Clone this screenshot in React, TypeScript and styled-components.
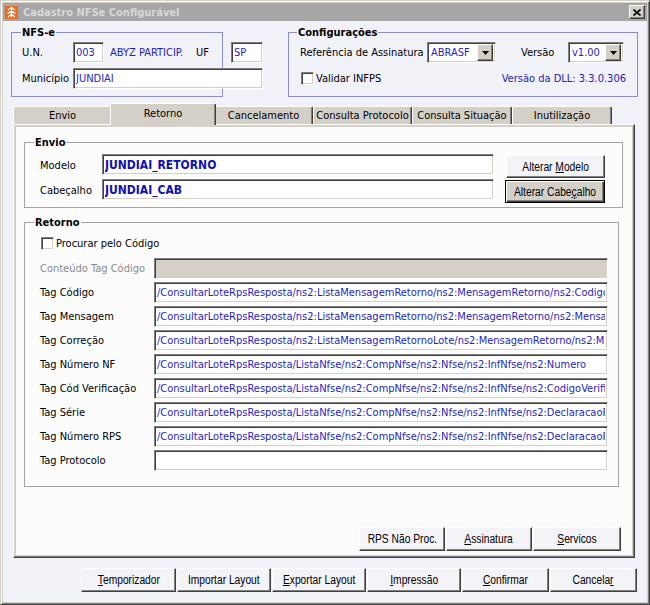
import React from "react";
import styled, { createGlobalStyle, css } from "styled-components";

const FONT = `"DejaVu Sans Condensed", "DejaVu Sans", sans-serif`;
const BTN_FONT = `"Liberation Sans", Arial, sans-serif`;

const FACE = "#d4d0c8";
const BODY = "#f1f1f8";
const SHEET = "#fcfcfc";
const VALUE = "#1f1fbf";

const GlobalStyle = createGlobalStyle`
  html, body { margin: 0; padding: 0; background: #ffffff; }
  body { font-family: ${FONT}; font-size: 11px; color: #000; }
  *, *::before, *::after { box-sizing: border-box; }
`;

const raised = css`
  border: 1px solid;
  border-color: #ffffff #404040 #404040 #ffffff;
  box-shadow: inset -1px -1px #808080;
`;

const sunken = css`
  border: 1px solid;
  border-color: #808080 #ffffff #ffffff #808080;
  box-shadow: inset 1px 1px #404040, inset -1px -1px ${FACE};
`;

const Window = styled.div`
  width: 650px;
  height: 605px;
  display: flex;
  flex-direction: column;
  background: ${FACE};
  border: 1px solid;
  border-color: ${FACE} #404040 #404040 ${FACE};
  box-shadow: inset 1px 1px #ffffff, inset -1px -1px #808080;
  padding: 2px;
`;

const TitleBar = styled.div`
  height: 18px;
  flex-shrink: 0;
  display: flex;
  align-items: center;
  background: #a6a6a6;
  padding: 0 2px 0 2px;
`;

const TitleText = styled.span`
  margin-left: 5px;
  font-weight: bold;
  font-size: 11px;
  color: #d8d8d8;
  white-space: nowrap;
`;

const CloseButton = styled.div`
  margin-left: auto;
  width: 16px;
  height: 14px;
  background: ${FACE};
  ${raised};
  display: flex;
  align-items: center;
  justify-content: center;
`;

const Body = styled.div`
  flex: 1;
  background: ${BODY};
  display: flex;
  flex-direction: column;
  padding: 5px 9px 0 8px;
`;

const TopRow = styled.div`
  display: flex;
  justify-content: space-between;
  height: 71px;
  flex-shrink: 0;
`;

const Group = styled.fieldset<{ $w: number; $h: number; $tone?: "blue" | "gray"; $mt?: number }>`
  margin: ${(p) => p.$mt ?? 0}px 0 0 0;
  padding: 0;
  min-width: 0;
  width: ${(p) => p.$w}px;
  height: ${(p) => p.$h}px;
  flex-shrink: 0;
  border: 1px solid ${(p) => (p.$tone === "gray" ? "#a4a4a4" : "#8c8cc8")};
`;

const Legend = styled.legend<{ $ml?: number }>`
  margin-left: ${(p) => p.$ml ?? 9}px;
  padding: 0 1px;
  font-weight: bold;
  font-size: 11px;
  line-height: 13px;
`;

const GroupContent = styled.div<{ $pt: number; $pl: number; $pr?: number; $gap: number }>`
  display: flex;
  flex-direction: column;
  padding: ${(p) => p.$pt}px ${(p) => p.$pr ?? 0}px 0 ${(p) => p.$pl}px;
  gap: ${(p) => p.$gap}px;
`;

const Row = styled.div<{ $h: number; $align?: string }>`
  display: flex;
  align-items: ${(p) => p.$align ?? "center"};
  height: ${(p) => p.$h}px;
`;

const Label = styled.span<{ $w?: number; $ml?: number; $muted?: boolean; $lh?: number }>`
  ${(p) => (p.$w ? `width: ${p.$w}px;` : "")}
  ${(p) => (p.$lh ? `line-height: ${p.$lh}px;` : "")}
  margin-left: ${(p) => p.$ml ?? 0}px;
  flex-shrink: 0;
  white-space: nowrap;
  color: ${(p) => (p.$muted ? "#8a8a8a" : "#000")};
`;

const BlueText = styled.span<{ $w?: number; $ml?: number; $right?: boolean }>`
  ${(p) => (p.$w ? `width: ${p.$w}px;` : "")}
  margin-left: ${(p) => (p.$right ? "auto" : `${p.$ml ?? 0}px`)};
  white-space: nowrap;
  overflow: hidden;
  flex-shrink: 0;
  color: #1e1eb0;
`;

const Field = styled.input<{ $w: number; $bold?: boolean; $disabled?: boolean }>`
  width: ${(p) => p.$w}px;
  height: 21px;
  flex-shrink: 0;
  margin: 0;
  padding: 0 2px;
  font-family: ${FONT};
  font-size: ${(p) => (p.$bold ? "12px" : "11px")};
  font-weight: ${(p) => (p.$bold ? "bold" : "normal")};
  color: ${(p) => (p.$bold ? "#1010b0" : VALUE)};
  background: ${(p) => (p.$disabled ? FACE : "#ffffff")};
  ${sunken};
  outline: none;
`;

const Combo = styled.div<{ $w: number }>`
  width: ${(p) => p.$w}px;
  height: 21px;
  flex-shrink: 0;
  display: flex;
  align-items: center;
  background: #ffffff;
  ${sunken};
  padding: 2px;
`;

const ComboText = styled.span`
  flex: 1;
  padding-left: 1px;
  color: ${VALUE};
  white-space: nowrap;
`;

const ComboButton = styled.span`
  width: 16px;
  height: 17px;
  background: ${FACE};
  ${raised};
  display: flex;
  align-items: center;
  justify-content: center;
`;

const Check = styled.span<{ $ml?: number }>`
  width: 13px;
  height: 13px;
  flex-shrink: 0;
  margin-left: ${(p) => p.$ml ?? 0}px;
  background: #ffffff;
  ${sunken};
`;

const TabControl = styled.div`
  margin: 6px 3px 0 2px;
  display: flex;
  flex-direction: column;
`;

const TabStrip = styled.div`
  display: flex;
  align-items: flex-end;
  height: 21px;
  position: relative;
  z-index: 1;
`;

const Tab = styled.div<{ $w: number; $active?: boolean }>`
  width: ${(p) => (p.$active ? p.$w + 4 : p.$w)}px;
  height: ${(p) => (p.$active ? 22 : 18)}px;
  margin: 0 ${(p) => (p.$active ? -2 : 0)}px ${(p) => (p.$active ? -1 : 0)}px;
  position: relative;
  z-index: ${(p) => (p.$active ? 2 : 1)};
  flex-shrink: 0;
  background: ${FACE};
  border-top: 1px solid #ffffff;
  border-left: 1px solid #ffffff;
  border-right: 1px solid #404040;
  box-shadow: inset -1px 0 #808080;
  border-radius: 2px 2px 0 0;
  text-align: center;
  padding-top: ${(p) => (p.$active ? 3 : 2)}px;
  line-height: 13px;
  white-space: nowrap;
  overflow: hidden;
`;

const Panel = styled.div`
  height: 434px;
  background: ${FACE};
  ${raised};
  padding: 2px;
  display: flex;
`;

const Sheet = styled.div`
  flex: 1;
  background: ${SHEET};
  display: flex;
  flex-direction: column;
  padding: 9px 0 4px 8px;
`;

const TagList = styled.div`
  display: flex;
  flex-direction: column;
  gap: 3px;
  margin-top: 3px;
`;

const ButtonRow = styled.div<{ $mt?: string; $pr: number }>`
  display: flex;
  justify-content: flex-end;
  gap: 1px;
  margin-top: ${(p) => p.$mt ?? "0"};
  padding-right: ${(p) => p.$pr}px;
  flex-shrink: 0;
`;

const Button = styled.button<{ $w: number; $h?: number; $face?: boolean; $focused?: boolean; $ml?: number; $mt?: number }>`
  width: ${(p) => p.$w}px;
  height: ${(p) => p.$h ?? 24}px;
  flex-shrink: 0;
  margin: ${(p) => p.$mt ?? 0}px 0 0 ${(p) => p.$ml ?? 0}px;
  padding: 0;
  display: flex;
  align-items: center;
  justify-content: center;
  overflow: hidden;
  color: #000;
  background: ${(p) => (p.$face ? FACE : "#f3f3f8")};
  cursor: default;
  ${(p) =>
    p.$focused
      ? css`
          border: 1px solid #000;
          box-shadow: inset 1px 1px #ffffff, inset -1px -1px #404040, inset -2px -2px #808080;
        `
      : raised};
`;

const ButtonLabel = styled.span`
  display: inline-block;
  font-family: ${BTN_FONT};
  font-size: 12.5px;
  white-space: nowrap;
  transform: scaleX(0.82);
  u { text-decoration: underline; }
`;

const AppIcon = () => (
  <svg width="13" height="13" viewBox="0 0 13 13">
    <rect width="13" height="13" fill="#ee6a1c" />
    <path d="M6.5 1.5v10M3 4l3.5-2.5L10 4M2.5 7.5l4-2.5 4 2.5M3 11l3.5-3 3.5 3" stroke="#fff" strokeWidth="1.2" fill="none" />
  </svg>
);

const CloseGlyph = () => (
  <svg width="8" height="7" viewBox="0 0 8 7">
    <path d="M0.5 0.5L7.5 6.5M7.5 0.5L0.5 6.5" stroke="#000" strokeWidth="1.6" />
  </svg>
);

const DownArrow = () => (
  <svg width="7" height="4" viewBox="0 0 7 4">
    <path d="M0 0h7L3.5 4z" fill="#000" />
  </svg>
);

const tabs = [
  { label: "Envio", w: 99 },
  { label: "Retorno", w: 102, active: true },
  { label: "Cancelamento", w: 99 },
  { label: "Consulta Protocolo", w: 99 },
  { label: "Consulta Situação", w: 100 },
  { label: "Inutilização", w: 100 },
];

const tagRows: { label: string; value: string; disabled?: boolean }[] = [
  { label: "Conteúdo Tag Código", value: "", disabled: true },
  { label: "Tag Código", value: "/ConsultarLoteRpsResposta/ns2:ListaMensagemRetorno/ns2:MensagemRetorno/ns2:Codigo" },
  { label: "Tag Mensagem", value: "/ConsultarLoteRpsResposta/ns2:ListaMensagemRetorno/ns2:MensagemRetorno/ns2:Mensagem" },
  { label: "Tag Correção", value: "/ConsultarLoteRpsResposta/ns2:ListaMensagemRetornoLote/ns2:MensagemRetorno/ns2:Mensagem" },
  { label: "Tag Número NF", value: "/ConsultarLoteRpsResposta/ListaNfse/ns2:CompNfse/ns2:Nfse/ns2:InfNfse/ns2:Numero" },
  { label: "Tag Cód Verificação", value: "/ConsultarLoteRpsResposta/ListaNfse/ns2:CompNfse/ns2:Nfse/ns2:InfNfse/ns2:CodigoVerificacao" },
  { label: "Tag Série", value: "/ConsultarLoteRpsResposta/ListaNfse/ns2:CompNfse/ns2:Nfse/ns2:InfNfse/ns2:DeclaracaoPrestacaoServico/ns2:Rps/ns2:Serie" },
  { label: "Tag Número RPS", value: "/ConsultarLoteRpsResposta/ListaNfse/ns2:CompNfse/ns2:Nfse/ns2:InfNfse/ns2:DeclaracaoPrestacaoServico/ns2:Rps/ns2:Numero" },
  { label: "Tag Protocolo", value: "" },
];

export default function App() {
  return (
    <>
      <GlobalStyle />
      <Window>
        <TitleBar>
          <AppIcon />
          <TitleText>Cadastro NFSe Configurável</TitleText>
          <CloseButton>
            <CloseGlyph />
          </CloseButton>
        </TitleBar>
        <Body>
          <TopRow>
            <Group $w={212} $h={71}>
              <Legend>NFS-e</Legend>
              <GroupContent $pt={3} $pl={10} $gap={5}>
                <Row $h={21}>
                  <Label $w={51}>U.N.</Label>
                  <Field $w={31} readOnly defaultValue="003" />
                  <BlueText $w={78} $ml={6}>ABYZ PARTICIP.</BlueText>
                  <Label $w={35} $ml={8}>UF</Label>
                  <Field $w={32} readOnly defaultValue="SP" />
                </Row>
                <Row $h={21}>
                  <Label $w={51}>Município</Label>
                  <Field $w={190} readOnly defaultValue="JUNDIAI" />
                </Row>
              </GroupContent>
            </Group>
            <Group $w={350} $h={71}>
              <Legend $ml={8}>Configurações</Legend>
              <GroupContent $pt={3} $pl={11} $pr={11} $gap={5}>
                <Row $h={21}>
                  <Label $w={127}>Referência de Assinatura</Label>
                  <Combo $w={69}>
                    <ComboText>ABRASF</ComboText>
                    <ComboButton>
                      <DownArrow />
                    </ComboButton>
                  </Combo>
                  <Label $w={47} $ml={25}>Versão</Label>
                  <Combo $w={56}>
                    <ComboText>v1.00</ComboText>
                    <ComboButton>
                      <DownArrow />
                    </ComboButton>
                  </Combo>
                </Row>
                <Row $h={21}>
                  <Check $ml={1} />
                  <Label $ml={2}>Validar INFPS</Label>
                  <BlueText $right>Versão da DLL: 3.3.0.306</BlueText>
                </Row>
              </GroupContent>
            </Group>
          </TopRow>

          <TabControl>
            <TabStrip>
              {tabs.map((t) => (
                <Tab key={t.label} $w={t.w} $active={t.active}>
                  {t.label}
                </Tab>
              ))}
            </TabStrip>
            <Panel>
              <Sheet>
                <Group $w={599} $h={72} $tone="gray">
                  <Legend>Envio</Legend>
                  <GroupContent $pt={5} $pl={15} $gap={1}>
                    <Row $h={24} $align="flex-start">
                      <Label $w={62} $lh={23}>Modelo</Label>
                      <Field $w={392} $bold readOnly defaultValue="JUNDIAI_RETORNO" />
                      <Button $w={99} $h={23} $ml={12} $mt={1}>
                        <ButtonLabel>
                          Alterar <u>M</u>odelo
                        </ButtonLabel>
                      </Button>
                    </Row>
                    <Row $h={24} $align="flex-start">
                      <Label $w={62} $lh={23}>Cabeçalho</Label>
                      <Field $w={392} $bold readOnly defaultValue="JUNDIAI_CAB" />
                      <Button $w={100} $h={23} $ml={11} $mt={1} $face $focused>
                        <ButtonLabel>
                          Alterar Cabe<u>ç</u>alho
                        </ButtonLabel>
                      </Button>
                    </Row>
                  </GroupContent>
                </Group>

                <Group $w={595} $h={271} $tone="gray" $mt={8}>
                  <Legend>Retorno</Legend>
                  <GroupContent $pt={6} $pl={15} $gap={3}>
                    <Row $h={17}>
                      <Check $ml={1} />
                      <Label $ml={2}>Procurar pelo Código</Label>
                    </Row>
                    <TagList>
                      {tagRows.map((r) => (
                        <Row $h={21} key={r.label}>
                          <Label $w={114} $muted={r.disabled}>
                            {r.label}
                          </Label>
                          <Field $w={454} $disabled={r.disabled} readOnly defaultValue={r.value} />
                        </Row>
                      ))}
                    </TagList>
                  </GroupContent>
                </Group>

                <ButtonRow $mt="auto" $pr={11}>
                  <Button $w={86}>
                    <ButtonLabel>RPS Não Proc.</ButtonLabel>
                  </Button>
                  <Button $w={86}>
                    <ButtonLabel>
                      <u>A</u>ssinatura
                    </ButtonLabel>
                  </Button>
                  <Button $w={88}>
                    <ButtonLabel>
                      <u>S</u>ervicos
                    </ButtonLabel>
                  </Button>
                </ButtonRow>
              </Sheet>
            </Panel>
          </TabControl>

          <ButtonRow $mt="10px" $pr={1}>
            <Button $w={95}>
              <ButtonLabel>
                <u>T</u>emporizador
              </ButtonLabel>
            </Button>
            <Button $w={94}>
              <ButtonLabel>Importar Layout</ButtonLabel>
            </Button>
            <Button $w={94}>
              <ButtonLabel>
                <u>E</u>xportar Layout
              </ButtonLabel>
            </Button>
            <Button $w={94}>
              <ButtonLabel>
                <u>I</u>mpressão
              </ButtonLabel>
            </Button>
            <Button $w={87}>
              <ButtonLabel>
                <u>C</u>onfirmar
              </ButtonLabel>
            </Button>
            <Button $w={87}>
              <ButtonLabel>
                Cancela<u>r</u>
              </ButtonLabel>
            </Button>
          </ButtonRow>
        </Body>
      </Window>
    </>
  );
}
